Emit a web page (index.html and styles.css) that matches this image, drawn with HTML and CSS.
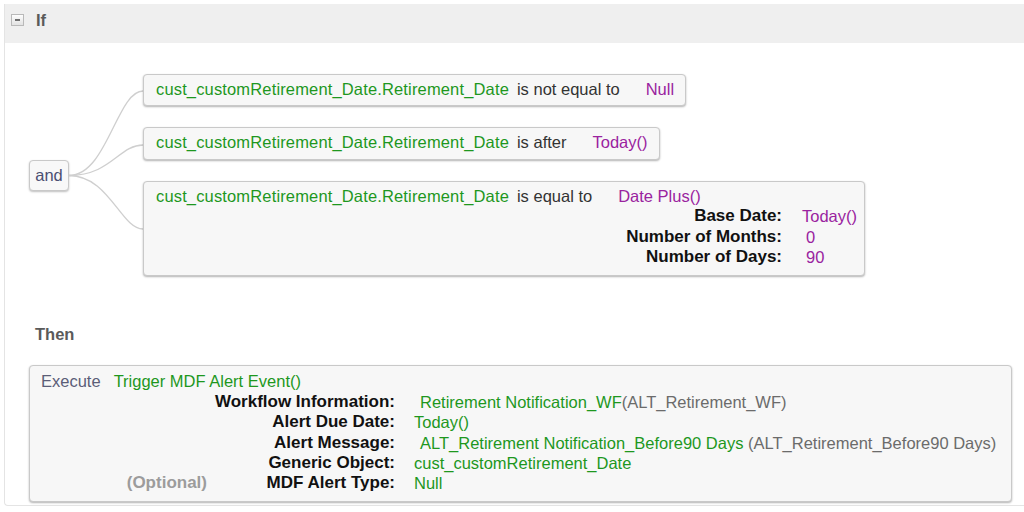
FILE: index.html
```html
<!DOCTYPE html>
<html lang="en">
<head>
<meta charset="utf-8">
<title>Business Rule</title>
<link rel="stylesheet" href="styles.css">
</head>
<body>
<div class="panel">
  <div class="header">
    <span class="toggle"><span class="minus"></span></span>
    <span class="section-title">If</span>
  </div>

  <div class="logic">
    <div class="and-node">and</div>
    <svg class="connectors" width="74" height="201" viewBox="0 0 74 201">
      <path d="M0 100.5 C 38 100.5, 48 16, 74 16" />
      <path d="M0 100.5 C 42 100.5, 50 70, 74 70" />
      <path d="M0 100.5 C 40 100.5, 52 154, 74 154" />
    </svg>
    <div class="conditions">
      <div class="cond">
        <div class="cond-line">
          <span class="field">cust_customRetirement_Date.Retirement_Date</span>
          <span class="op">is not equal to</span>
          <span class="val">Null</span>
        </div>
      </div>
      <div class="cond">
        <div class="cond-line">
          <span class="field">cust_customRetirement_Date.Retirement_Date</span>
          <span class="op">is after</span>
          <span class="val">Today()</span>
        </div>
      </div>
      <div class="cond">
        <div class="cond-line">
          <span class="field">cust_customRetirement_Date.Retirement_Date</span>
          <span class="op">is equal to</span>
          <span class="val">Date Plus()</span>
        </div>
        <div class="params">
          <span class="plabel">Base Date:</span><span class="val">Today()</span>
          <span class="plabel">Number of Months:</span><span class="val indent">0</span>
          <span class="plabel">Number of Days:</span><span class="val indent">90</span>
        </div>
      </div>
    </div>
  </div>

  <div class="section-title then">Then</div>

  <div class="execute">
    <div class="exec-line">
      <span class="exec-kw">Execute</span>
      <span class="green">Trigger MDF Alert Event()</span>
    </div>
    <div class="args">
      <span></span><span class="alabel">Workflow Information:</span><span class="aval indent"><span class="green">Retirement Notification_WF</span><span class="muted">(ALT_Retirement_WF)</span></span>
      <span></span><span class="alabel">Alert Due Date:</span><span class="aval"><span class="green">Today()</span></span>
      <span></span><span class="alabel">Alert Message:</span><span class="aval indent"><span class="green">ALT_Retirement Notification_Before90 Days</span> <span class="muted">(ALT_Retirement_Before90 Days)</span></span>
      <span></span><span class="alabel">Generic Object:</span><span class="aval"><span class="green">cust_customRetirement_Date</span></span>
      <span class="optional">(Optional)</span><span class="alabel">MDF Alert Type:</span><span class="aval"><span class="green">Null</span></span>
    </div>
  </div>
</div>
</body>
</html>
```

FILE: styles.css
```css
html, body {
  margin: 0;
  padding: 0;
  background: #ffffff;
  overflow: hidden;
}

body {
  font-family: "Liberation Sans", Arial, sans-serif;
  font-size: 16.5px;
  color: #333333;
}

.panel {
  margin: 4px 0 0 4px;
  width: 1020px;
  height: 502px;
  border-left: 1px solid #e4e4e4;
  border-bottom: 1px solid #e4e4e4;
  border-bottom-left-radius: 4px;
  box-sizing: border-box;
}

.header {
  height: 39px;
  box-sizing: border-box;
  background: #efefef;
  display: flex;
  align-items: center;
  padding: 0 0 8px 6px;
}

.toggle {
  width: 11px;
  height: 10px;
  border: 1px solid #b9b9b9;
  background: linear-gradient(#fdfdfd, #e2e2e2);
  display: flex;
  align-items: center;
  justify-content: center;
  margin-right: 12px;
}

.minus {
  width: 5px;
  height: 2px;
  background: #6f6f6f;
}

.section-title {
  font-weight: bold;
  font-size: 16.5px;
  color: #5a5a5a;
  line-height: 20px;
}

.logic {
  display: flex;
  align-items: center;
  margin-top: 31px;
  padding-left: 24px;
}

.and-node {
  width: 38px;
  height: 29px;
  border: 1px solid #c9c9c9;
  border-radius: 4px;
  background: #f8f8f8;
  box-shadow: 0 1px 2px rgba(0, 0, 0, 0.25);
  color: #4b4f72;
  display: flex;
  align-items: center;
  justify-content: center;
  font-size: 16.5px;
}

.connectors {
  display: block;
  flex: none;
}

.connectors path {
  fill: none;
  stroke: #cfcfcf;
  stroke-width: 1.3;
}

.conditions {
  display: flex;
  flex-direction: column;
  align-items: flex-start;
  gap: 21px;
}

.cond {
  border: 1px solid #c9c9c9;
  border-radius: 4px;
  background: #f7f7f7;
  box-shadow: 0 1px 2px rgba(0, 0, 0, 0.3);
  padding: 4px 11px 6px 12px;
  line-height: 20.4px;
}

.cond:last-child {
  padding-bottom: 8px;
  padding-right: 7px;
}

.cond-line {
  display: flex;
  white-space: nowrap;
}

.field {
  color: #1e971e;
  margin-right: 8px;
  letter-spacing: 0.15px;
}

.op {
  color: #333333;
  margin-right: 26px;
}

.val {
  color: #9a239f;
}

.params {
  display: grid;
  grid-template-columns: 626px auto;
  column-gap: 20px;
  white-space: nowrap;
}

.plabel {
  text-align: right;
  font-weight: bold;
  font-size: 17px;
  color: #111111;
}

.indent {
  padding-left: 4px;
}

.then {
  margin: 48px 0 0 30px;
}

.execute {
  margin: 21px 12px 0 24px;
  border: 1px solid #c9c9c9;
  border-radius: 4px;
  background: #f7f7f7;
  box-shadow: 0 1px 2px rgba(0, 0, 0, 0.3);
  padding: 5px 8px 7px 11px;
  line-height: 20.4px;
  white-space: nowrap;
}

.exec-line {
  display: flex;
}

.exec-kw {
  color: #5b5e78;
  margin-right: 13px;
}

.green {
  color: #1e971e;
}

.muted {
  color: #6b6b6b;
}

.args {
  display: grid;
  grid-template-columns: 166px 188px auto;
}

.alabel {
  text-align: right;
  font-weight: bold;
  font-size: 17px;
  color: #111111;
}

.optional {
  text-align: right;
  font-weight: bold;
  font-size: 17px;
  color: #9c9c9c;
}

.aval {
  padding-left: 19px;
}

.aval.indent {
  padding-left: 25px;
}
```
